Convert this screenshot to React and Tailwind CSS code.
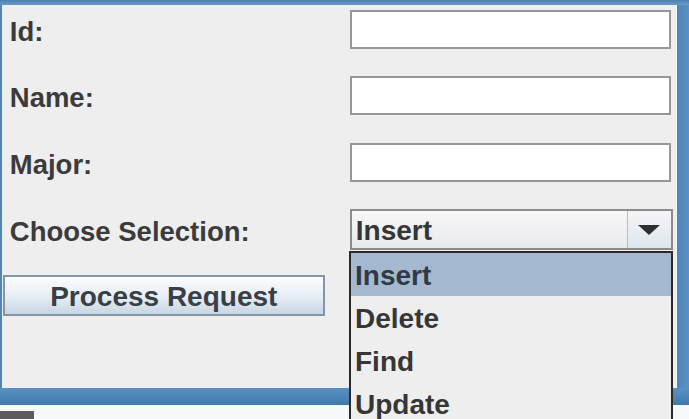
// Swing-style student form with the selection combo opened
const font = { fontFamily: '"Liberation Sans", Arial, sans-serif' };

const rows = [
  { label: "Id:", h: "h-[39px]", mt: "mt-[5px]" },
  { label: "Name:", h: "h-[39px]", mt: "mt-[27px]" },
  { label: "Major:", h: "h-[39px]", mt: "mt-[28px]" },
];

const options = ["Insert", "Delete", "Find", "Update"];

function Label({ children }) {
  return (
    <div className="flex w-[348px] items-center pl-[8px] pt-[4px] text-[27.5px] font-bold leading-none text-[#3b3b3b]">
      {children}
    </div>
  );
}

export default function App() {
  return (
    <div
      className="relative flex h-[419px] w-[689px] flex-col overflow-hidden bg-white"
      style={font}
    >
      {/* window frame top */}
      <div className="h-[5px] bg-gradient-to-b from-[#4a7fb2] to-[#6a9ccb]" />

      <div className="flex h-[383px]">
        <div className="w-[2px] bg-[#4f85b8]" />

        {/* content pane */}
        <div className="flex flex-1 flex-col bg-[#eeeeef] pr-[3px]">
          {rows.map((r) => (
            <div key={r.label} className={`flex ${r.mt}`}>
              <Label>{r.label}</Label>
              <div
                className={`${r.h} w-[321px] border-2 border-[#979797] bg-white`}
              />
            </div>
          ))}

          <div className="mt-[27px] flex">
            <Label>Choose Selection:</Label>
            <div className="flex h-[41px] w-[323px] border-2 border-[#8c8c8c] bg-gradient-to-b from-[#f7f7f8] to-[#e9eaec]">
              <div className="flex flex-1 items-center pl-[4px] pt-[2px] text-[28px] font-bold leading-none text-[#363636]">
                Insert
              </div>
              <div className="flex w-[44px] items-center justify-center border-l border-[#b9bcc0] bg-gradient-to-b from-[#f4f6f8] to-[#dfe5ec]">
                <svg width="24" height="12" viewBox="0 0 24 12">
                  <path d="M1 1 H23 L12 11 Z" fill="#2e2e2e" />
                </svg>
              </div>
            </div>
          </div>

          <div className="ml-[1px] mt-[25px] flex h-[41px] w-[322px] items-center justify-center border-2 border-[#8196a8] bg-gradient-to-b from-[#fbfcfd] via-[#e9eff5] to-[#c7d6e4] pt-[2px] text-[28px] font-bold leading-none text-[#3a3f45]">
            Process Request
          </div>
        </div>

        <div className="w-[1px] bg-[#f4f7fa]" />
        <div className="w-[14px] bg-gradient-to-r from-[#4f86ba] to-[#5b91c3]" />
      </div>

      {/* window frame bottom */}
      <div className="h-[17px] bg-gradient-to-b from-[#5b90c2] to-[#4279ad]" />

      <div className="flex h-[14px] items-end bg-[#f6f8fa]">
        <div className="h-[8px] w-[34px] bg-[#5c5c5c]" />
      </div>

      {/* opened combo list */}
      <div className="absolute left-[349px] top-[251px] h-[190px] w-[324px] border-2 border-[#2a2a2a] bg-[#eeeeef]">
        {options.map((o, i) => (
          <div
            key={o}
            className={`flex h-[43px] items-center pl-[4px] pt-[2px] text-[28px] font-bold leading-none ${
              i === 0
                ? "bg-[#a4b9cf] text-[#2f3a46]"
                : "text-[#363636]"
            }`}
          >
            {o}
          </div>
        ))}
      </div>
    </div>
  );
}
